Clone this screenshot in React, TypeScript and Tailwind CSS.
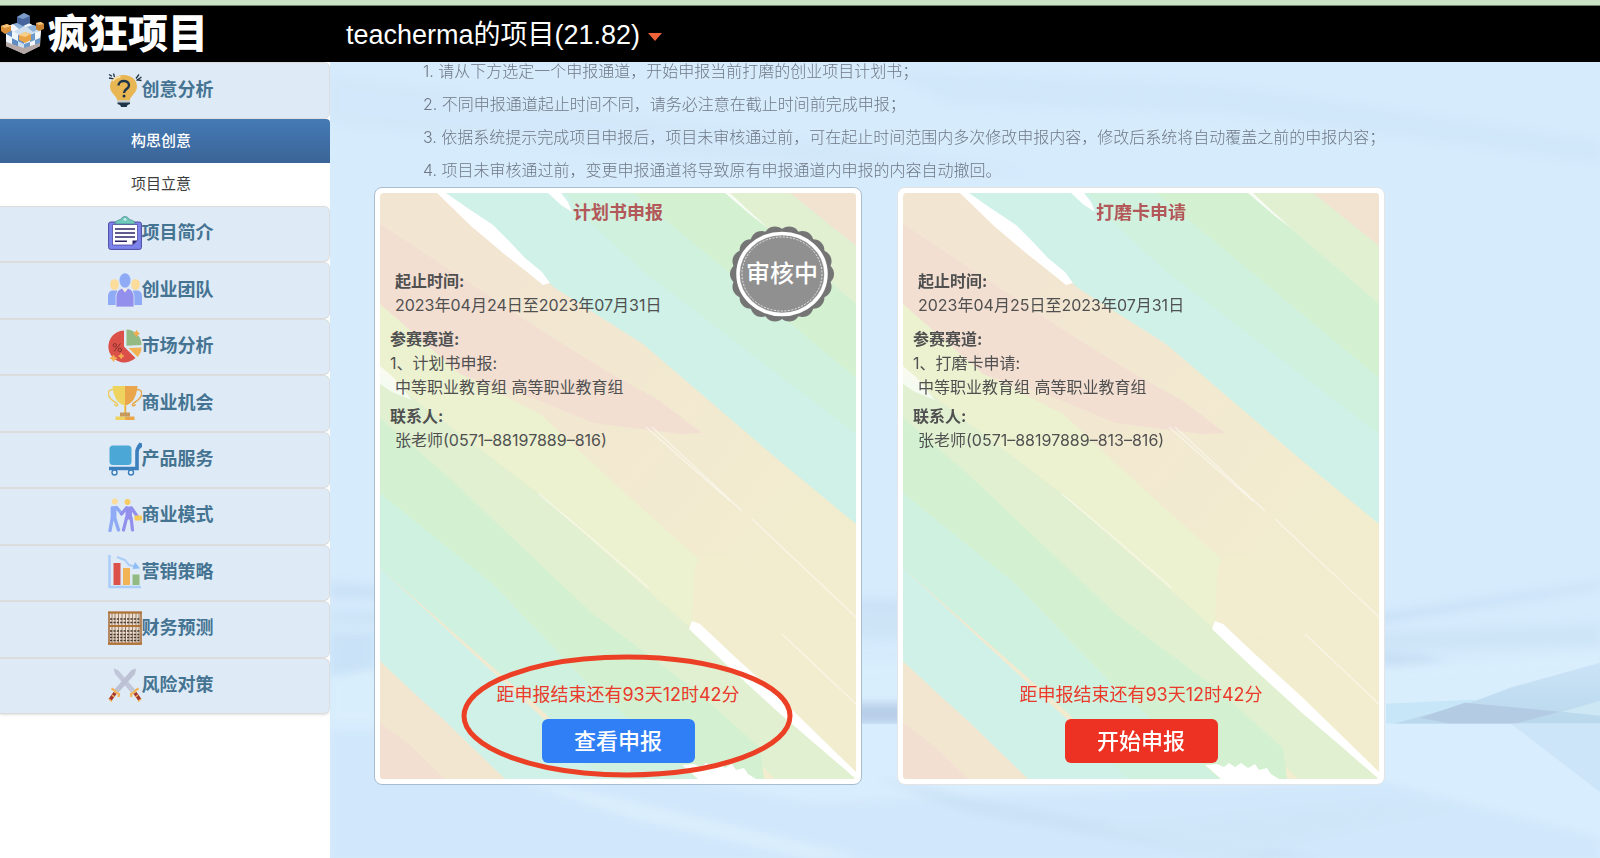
import type { ReactNode } from 'react';

function Svg({ children }: { children: ReactNode }) {
  return (
    <svg viewBox="0 0 34 34" className="size-[34px] shrink-0" aria-hidden="true">
      {children}
    </svg>
  );
}

function BulbIcon() {
  return (
    <Svg>
      <path d="M1 1.500l3 1.800M5.500.5l1 3.500M1 5l5 .8M31 1.500l-3 4M33.500 4l-5 3.500M33.500 7.500l-4.500-.6" stroke="#1e3448" strokeWidth="1.300" fill="none" />
      <path d="M15.500 2C7.500 2 2 7 2 13.500c0 4 2.300 6.500 4.500 9 1.600 1.800 2.500 3.200 2.700 5h12.600c.2-1.800 1.100-3.200 2.700-5 2.200-2.500 4.500-5 4.500-9C29 7 23.500 2 15.500 2z" fill="#e8b754" />
      <path d="M5 8c1.500-2.500 4-4 7.500-4.300" stroke="#f9e8bd" strokeWidth="1.600" fill="none" />
      <path d="M10.500 12.500c0-6 10.500-6 10.500-.3 0 4-5 3.600-5 7.800" stroke="#1e3448" strokeWidth="2.400" fill="none" />
      <circle cx="16" cy="23" r="1.500" fill="#1e3448" />
      <path d="M9.500 27.500h12.500v2H9.500z" fill="#bfc6c9" />
      <path d="M9.500 29.500h12.500v1.500l-2.500 1-.8 2h-5.600l-1-2-2.600-1z" fill="#1e3448" />
    </Svg>
  );
}

function ClipboardIcon() {
  return (
    <Svg>
      <rect x=".6" y="6" width="32.800" height="27.400" rx="2" fill="#7c83ea" stroke="#4c49a0" strokeWidth="1" />
      <path d="M4.500 8.500h25v16l-5 4.500h-20z" fill="#fff" stroke="#4c49a0" strokeWidth=".8" />
      <path d="M29.500 24.500l-5 4.500v-4.500z" fill="#2c2469" />
      <path d="M7 8c0-2.500 2.500-4 6-4.500C13.500 1.500 15 .6 17 .6s3.500.9 4 2.900C24.500 4 27 5.500 27 8z" fill="#6fcabb" stroke="#48808e" strokeWidth=".7" />
      <circle cx="17" cy="3.500" r="1.300" fill="#dcebf6" />
      <path d="M7 13h20M7 17h20M7 21h20M7 25.300h12" stroke="#2c2469" strokeWidth="1.500" />
    </Svg>
  );
}

function TeamIcon() {
  return (
    <Svg>
      <ellipse cx="6.500" cy="11.500" rx="4.300" ry="5.500" fill="#fbdc9a" />
      <ellipse cx="27.500" cy="11.500" rx="4.300" ry="5.500" fill="#fbdc9a" />
      <path d="M0 32V24c0-4.500 2-6.500 5-6.500h4v14.500zM34 32V24c0-4.500-2-6.500-5-6.500h-4v14.500z" fill="#8fabf6" />
      <path d="M8 34V24c0-4 2-7.500 5.500-8.500h7C24 16.500 26 20 26 24v10z" fill="#938fec" stroke="#deebf6" strokeWidth=".8" />
      <path d="M14 15.500h6l-3 4z" fill="#f7eee0" />
      <ellipse cx="17" cy="7.500" rx="5.500" ry="7.300" fill="#8fabf6" />
    </Svg>
  );
}

function PieIcon() {
  return (
    <Svg>
      <path d="M16 1.500A16 16 0 1 0 27.500 29L16 17.500z" fill="#db5149" />
      <path d="M18.500.5A15.500 15.500 0 0 1 33.500 16l-15 .8z" fill="#93ba82" />
      <path d="M33.500 18.500c0 4-1.500 7-4 9.500L20.500 19z" fill="#f2b355" />
      <circle cx="6.800" cy="16.300" r="1.700" fill="none" stroke="#87302d" strokeWidth="1" />
      <circle cx="11.800" cy="21" r="1.700" fill="none" stroke="#87302d" strokeWidth="1" />
      <path d="M12.500 14.500l-6.500 8" stroke="#87302d" strokeWidth="1" />
      <path d="M28.500 1.500l1 2 2 1-2 1-1 2-1-2-2-1 2-1zM5.500 26l1 2.200 2.300 1-2.300 1-1 2.300-1-2.300-2.300-1 2.300-1zM13.200 24.500l.8 1.800 1.800.8-1.800.8-.8 1.800-.8-1.800-1.800-.8 1.800-.8z" fill="#f4ad4c" stroke="#f4ad4c" />
    </Svg>
  );
}

function TrophyIcon() {
  return (
    <Svg>
      <path d="M6 3.500C-1 3-1 9 3 13s6 3.500 6.500 5.500-3 1.500-2.500-.5" fill="none" stroke="#eccb5c" strokeWidth="1.500" />
      <path d="M28 3.500c7-.5 7 5.500 3 9.500s-6 3.500-6.500 5.500 3 1.500 2.500-.5" fill="none" stroke="#e7a94b" strokeWidth="1.500" />
      <path d="M4.500 0H17v19.500C10 18 5.500 12 4.500 0zM16 19h1v8h-1zM7.500 30.500H17V34H7.500z" fill="#efd35f" />
      <path d="M29.500 0H17v19.500C24 18 28.500 12 29.500 0zM17 19h1.200v8H17zM17 30.500h9.500V34H17z" fill="#e9a64a" />
      <path d="M12 26.500h10v4H12z" fill="#c59a5c" />
    </Svg>
  );
}

function CartIcon() {
  return (
    <Svg>
      <rect x="1.500" y="3.500" width="22" height="19.500" rx="3.500" fill="#4aa7d6" />
      <path d="M1 26.500h28V10c0-3.500 1-5 3.500-7.500" fill="none" stroke="#3c7fbd" strokeWidth="3.600" />
      <path d="M29 4.500l2.500-4 2.500 1v3.500l-3.500 3z" fill="#3c7fbd" />
      <circle cx="6.500" cy="30.500" r="2.500" fill="#e6f2fa" stroke="#3c7fbd" strokeWidth="1.400" />
      <circle cx="23" cy="30.500" r="2.500" fill="#e6f2fa" stroke="#3c7fbd" strokeWidth="1.400" />
    </Svg>
  );
}

function HandshakeIcon() {
  return (
    <Svg>
      <circle cx="6.800" cy="3.500" r="3" fill="#fbdc9a" />
      <circle cx="19.500" cy="4" r="3" fill="#f6cb62" />
      <path d="M4.500 10v9L2 32.500M6.500 10v9.500l4 12.500M8.500 9.500l5 6" stroke="#8fabf6" strokeWidth="3.400" strokeLinecap="round" strokeLinejoin="round" fill="none" />
      <path d="M2.800 8.500h5.500v12H2.800z" fill="#8fabf6" />
      <path d="M18.500 10l-5 6M18.500 20l-3 12M23 19.500L24.500 32M23.500 10l5.500 8" stroke="#938fec" strokeWidth="3.200" strokeLinecap="round" fill="none" />
      <path d="M17.500 8.500h6.500v13h-6.500z" fill="#938fec" />
      <rect x="26.500" y="17.500" width="7.500" height="5" rx="1" fill="#f6cb5a" />
    </Svg>
  );
}

function BarsIcon() {
  return (
    <Svg>
      <path d="M1.500 0v32H33" fill="none" stroke="#a9cdf8" strokeWidth="2.400" />
      <path d="M5.500 8h7v22h-7z" fill="#db5149" />
      <path d="M15 13h7v17h-7z" fill="#f2b355" />
      <path d="M24.500 19.500h7V30h-7z" fill="#93ba82" />
      <path d="M9 2l8 3 4 5 7 1.500" fill="none" stroke="#a9cdf8" strokeWidth="2" />
      <path d="M27 7l5 6.500-7.500.5z" fill="#8fbdf5" />
    </Svg>
  );
}

function AbacusIcon() {
  return (
    <Svg>
      <rect x="1" y="1.500" width="32" height="31.500" fill="#eadfd2" stroke="#a9713f" strokeWidth="1.600" />
      <path d="M4 2v31M7 2v31M10.500 2v31M14 2v31M17.500 2v31M21 2v31M24.500 2v31M28 2v31M31 2v31" stroke="#8c6a4c" strokeWidth=".8" />
      <path d="M2 8h30M2 11.500h30M2 20h30M2 23.500h30M2 26.500h30M2 29.500h30" stroke="#4b3a30" strokeWidth="1.700" strokeDasharray="2.200 1.200" />
      <path d="M0 1.500h34M1 15h32M0 32.500h34" stroke="#b07338" strokeWidth="1.800" />
    </Svg>
  );
}

function SwordsIcon() {
  return (
    <Svg>
      <path d="M5.500.5l4.500 1.500L27 21.500 23.500 25 7 6z" fill="#c1c6d8" />
      <path d="M28 .5L23.500 2 6.500 21.500 10 25 27 6z" fill="#bcc1d4" />
      <path d="M3.500 20.500l2.500 1.500 2 2.500 3 1.500-.5 3M30.500 20.500L28 22l-2 2.500-3 1.500.5 3" fill="none" stroke="#f2b355" strokeWidth="2.200" />
      <path d="M7 25l-5 7M27 25l5 7" stroke="#a3342f" strokeWidth="3.600" />
      <path d="M4 27l2.500 2M30 27l-2.500 2M1 31l3 2.500M33 31l-3 2.500" stroke="#f2b355" strokeWidth="1.500" />
    </Svg>
  );
}

function CubeLogo() {
  return (
    <svg viewBox="0 0 44 42" className="h-[42px] w-11 shrink-0" aria-hidden="true">
      <path d="M6 14L24 8l17 8-1 17-16 8-18-8z" fill="#cfdff0" />
      <path d="M6 14l7-3 7 4-7 4zM20 9l6-1 6 4-7 2z" fill="#f2f7fb" />
      <path d="M13 11l7-2 5 4-6 3zM27 14l7-2 6 3-7 4z" fill="#8fb2da" />
      <path d="M6 14l6 4v6l-6-3zM18 22l6 2v7l-6-3zM12 25l6 3v6l-6-3z" fill="#5f8cc4" />
      <path d="M12 18l6 3v7l-6-3zM6 21l6 4v6l-6-3z" fill="#f0f6fb" />
      <path d="M24 24l6-2v7l-6 2zM35 20l6-2-1 7-5 2zM30 29l5-2v7l-5 2z" fill="#f5f8fb" />
      <path d="M30 22l5-2v7l-5 2zM24 31l6-2v7l-6 3zM35 27l5-2v7l-5 2z" fill="#6e9acb" />
      <path d="M6 29l18 6 16-5v3l-16 8-18-8z" fill="#b5a7a6" />
      <path d="M19 22l6-3 6 2v6l-6 3-6-3z" fill="#e8a447" />
      <path d="M19 22l6-3 6 2-6 3z" fill="#f6d08b" />
      <path d="M17 4l7-4 6 3v7l-7 3-6-3z" fill="#45659c" />
      <path d="M17 4l7-4 6 3-7 3z" fill="#7e9cc9" />
      <path d="M1 13l6-2 4 2v5l-6 3-4-3z" fill="#d98f3a" />
      <path d="M1 13l6-2 4 2-6 2z" fill="#f4c57c" />
      <path d="M36 10l5-1 3 2v5l-5 2-3-2z" fill="#c98532" />
      <path d="M36 10l5-1 3 2-5 1z" fill="#f4c57c" />
    </svg>
  );
}

// painted diagonal stripes behind every channel card
function StripeArt({ id }: { id: string }) {
  return (
    <svg
      viewBox="0 0 476 586"
      preserveAspectRatio="none"
      className="absolute inset-0 size-full"
      aria-hidden="true"
    >
      <defs>
        <linearGradient id={id} x1="0" y1="0" x2="1" y2="1">
          <stop offset="0.15" stopColor="#f2e5d2" />
          <stop offset="0.8" stopColor="#f2edcf" />
        </linearGradient>
      </defs>
      <rect width="476" height="586" fill={`url(#${id})`} />
      <path d="M60 0H476V331L396 265 263 151 175 95z" fill="#cff1e7" />
      <path d="M185 0H253L476 185V241L263 78 205 25z" fill="#cff1de" />
      <path d="M253 0H346L476 111V185z" fill="#d3f1d1" />
      <path d="M346 0H410L476 53V111z" fill="#e1f0d0" />
      <path d="M410 0H476V53z" fill="#f2e3d1" />
      <path d="M0 31L165 140 230 180 280 208 322 240 300 241 213 230 140 200 80 181 0 111z" fill="#f2dfd2" />
      <path d="M0 111L80 181 160 221 246 301 313 361 402 438 350 420 322 440 306 431 159 301 0 180z" fill="#ecf2d0" />
      <path d="M314 385c0-24 16-28 34-20 22 8 40 34 54 73l-60 8-30-18z" fill="#f2edcf" />
      <path d="M0 180L159 301 306 431 476 586H395L313 505 213 421 66 288 0 230z" fill="#e1f0d0" />
      <path d="M0 225L66 282 213 421 313 495 380 555 384 586H313L206 488 113 391 0 305z" fill="#d3f1d1" />
      <path d="M0 300L113 391 206 488 316 586H213L166 521 0 375z" fill="#cff1df" />
      <path d="M0 375L166 528 225 586H125L0 468z" fill="#cff1e8" />
      <path d="M0 470L62 525 125 586H0z" fill="#f2e6d1" />
      <path d="M0 530L30 552 65 586H0z" fill="#f2dfd2" />
      <g fill="#fff">
        <path d="M57 0h9l20 14 27 18 16 16 16 17 17 14 8 11-7 2-16-13-24-19-32-27z" />
        <path d="M168 0h13l7 9 4 10-11-7z" />
        <path d="M345 0h5l18 17 20 18-16-12z" opacity=".8" />
        <path d="M312 428l8 3 34 32 45 41 77 75v7l-78-67-47-43-42-40z" />
        <path d="M302 572l12-1 7 3 5-4 6 4 6-4 7 5 7-4 4 6 8-2 4 6 8 5h-58z" />
        <path d="M0 173l14 12 18 22-20-8-12-8z" opacity=".7" />
      </g>
      <path d="M159 301l50 42 60 52M266 234l84 74M272 234l90 84M372 326l104 98M402 441l74 70" fill="none" stroke="#fff" strokeWidth="1.200" opacity=".5" />
    </svg>
  );
}

function Backdrop() {
  return (
    <svg
      viewBox="0 0 1270 796"
      preserveAspectRatio="none"
      className="absolute inset-0 size-full"
      aria-hidden="true"
    >
      <defs>
        <filter id="soften" x="-5%" y="-50%" width="110%" height="200%">
          <feGaussianBlur stdDeviation="4" />
        </filter>
        <linearGradient id="wedge" x1="0" y1="0" x2="0" y2="1">
          <stop offset="0" stopColor="#cbe3f7" />
          <stop offset="1" stopColor="#b9d8ec" />
        </linearGradient>
      </defs>
      <rect width="1270" height="796" fill="#d6ebfc" />
      <g filter="url(#soften)">
        <path d="M0 15L300 55 700 110 300 90 0 60z" fill="#cfe5f8" opacity=".5" />
        <path d="M560 10L900 25 1270 80V100L900 50 620 40z" fill="#cfe5f8" opacity=".6" />
        <path d="M0 520L60 525 1056 550 1270 520V525L1056 560 0 535z" fill="#cae1f6" />
        <path d="M0 548H560L1056 570 1270 562V582L1056 588 0 562z" fill="#cde4f7" />
        <path d="M1040 590L1090 592 1120 598 1056 603z" fill="#c6def4" />
        <path d="M0 608L560 600 1056 606 1270 590V661H0z" fill="#d9eefd" />
        <path d="M0 570H45V606L0 614z" fill="#c9e2f7" />
        <path d="M500 640H600V661H500z" fill="#b8cfe8" />
      </g>
      <path d="M1056 641L1140 637 1165 640 1110 661H1056z" fill="#c7e6f7" />
      <path d="M1064 661L1140 640 1180 625 1270 600V661z" fill="url(#wedge)" />
      <path d="M1090 655L1135 640 1230 649 1185 661H1120z" fill="#b4cbe4" />
      <path d="M1232 649L1270 638V653z" fill="#cde7f4" />
      <rect y="661" width="1270" height="135" fill="#d8edfd" />
      <path d="M1181 661H1270V729z" fill="#cde5f8" />
      <g filter="url(#soften)">
        <path d="M0 667H45L480 740 1056 720 1270 775V800H0z" fill="#cfe6fa" opacity=".8" />
        <path d="M150 705L330 745 540 796H480L300 755z" fill="#daeefd" />
        <path d="M545 715L720 750 1000 796H900L640 750z" fill="#cbe1f5" opacity=".8" />
        <path d="M760 765L1050 735 1130 745 900 796z" fill="#d0e6f9" opacity=".8" />
      </g>
    </svg>
  );
}

function ReviewBadge() {
  const petals = Array.from({ length: 18 }, (_, i) => (i * Math.PI * 2) / 18);
  return (
    <div className="absolute top-[39px] right-7 grid h-24 w-[104px] place-items-center">
      <svg viewBox="0 0 104 96" className="absolute inset-0 size-full" aria-hidden="true">
        {petals.map((a) => (
          <ellipse key={a} cx={52 + Math.cos(a) * 41} cy={48 + Math.sin(a) * 37} rx="11" ry="11" fill="#757575" />
        ))}
        <ellipse cx="52" cy="48" rx="48" ry="44" fill="#757575" />
        <ellipse cx="52" cy="48" rx="44" ry="40.500" fill="#909090" stroke="#fff" strokeWidth="3.500" />
        <ellipse cx="52" cy="48" rx="40" ry="37" fill="none" stroke="#e8e8e8" strokeWidth="1" strokeDasharray="2 1.500" />
      </svg>
      <span className="relative text-2xl font-medium text-white">审核中</span>
    </div>
  );
}

const menu = [
  { label: '项目简介', icon: <ClipboardIcon /> },
  { label: '创业团队', icon: <TeamIcon /> },
  { label: '市场分析', icon: <PieIcon /> },
  { label: '商业机会', icon: <TrophyIcon /> },
  { label: '产品服务', icon: <CartIcon /> },
  { label: '商业模式', icon: <HandshakeIcon /> },
  { label: '营销策略', icon: <BarsIcon /> },
  { label: '财务预测', icon: <AbacusIcon /> },
  { label: '风险对策', icon: <SwordsIcon /> },
];

const rules = [
  '1. 请从下方选定一个申报通道，开始申报当前打磨的创业项目计划书；',
  '2. 不同申报通道起止时间不同，请务必注意在截止时间前完成申报；',
  '3. 依据系统提示完成项目申报后，项目未审核通过前，可在起止时间范围内多次修改申报内容，修改后系统将自动覆盖之前的申报内容；',
  '4. 项目未审核通过前，变更申报通道将导致原有申报通道内申报的内容自动撤回。',
];

function MenuItem({ label, icon }: { label: string; icon: ReactNode }) {
  return (
    <a
      href="#"
      className="flex flex-1 items-center justify-center rounded-r-md border-y border-r border-[#dcdcdc] bg-[#deebf6] pr-2 pb-0.5 text-lg font-bold text-[#457392]"
    >
      {icon}
      {label}
    </a>
  );
}

type ChannelProps = {
  id: string;
  title: string;
  period: string;
  contact: string;
  frame: string;
  children: ReactNode;
};

function ChannelCard({ id, title, period, contact, frame, children }: ChannelProps) {
  return (
    <section className={`relative rounded-lg border bg-white p-[5px] ${frame}`}>
      <div className="relative overflow-hidden rounded-sm">
        <StripeArt id={id} />
        <div className="relative flex h-[586px] flex-col px-[10px] pt-[6px] pb-4 text-base leading-6 text-[#505050]">
          <h2 className="text-center text-lg leading-7 font-bold text-[#b35858]">{title}</h2>
          <dl className="mt-[42px]">
            <dt className="pl-[5px] font-bold">起止时间:</dt>
            <dd className="pl-[5px]">{period}</dd>
            <dt className="mt-[10px] font-bold">参赛赛道:</dt>
            <dd>1、{title}:</dd>
            <dd className="pl-[5px]">中等职业教育组 高等职业教育组</dd>
            <dt className="mt-[5px] font-bold">联系人:</dt>
            <dd className="pl-[5px]">{contact}</dd>
          </dl>
          <div className="mt-auto flex flex-col items-center gap-[10px]">
            <p className="text-lg leading-7 text-[#e93a2b]">距申报结束还有93天12时42分</p>
            {children}
          </div>
        </div>
      </div>
    </section>
  );
}

export default function App() {
  return (
    <div className="flex min-h-screen flex-col overflow-hidden bg-white font-['Inter','Noto_Sans_CJK_SC',sans-serif]">
      <div className="h-[6px] border-b border-[#6f866c] bg-[#cbe2c7]" />
      <header className="relative z-10 flex h-14 items-center bg-black text-white">
        <div className="flex w-[330px] items-center gap-1">
          <CubeLogo />
          <span className="text-[40px] leading-none font-black">疯狂项目</span>
        </div>
        <button className="ml-4 flex items-center gap-2 pt-0.5 font-['Liberation_Sans','Noto_Sans_CJK_SC',sans-serif] text-[27px] leading-10">
          teacherma的项目(21.82)
          <svg viewBox="0 0 14 8" className="mt-1 h-2 w-[14px]" aria-hidden="true">
            <path d="M0 0h14L7 8z" fill="#f0623a" />
          </svg>
        </button>
      </header>

      <div className="flex flex-1">
        <nav className="w-[330px] shrink-0">
          <div className="flex h-[57px]">
            <MenuItem label="创意分析" icon={<BulbIcon />} />
          </div>
          <a
            href="#"
            className="flex h-11 items-center justify-center rounded-tr bg-linear-to-b from-[#457ab5] to-[#3a6497] pr-2 text-[15px] font-medium text-white"
          >
            构思创意
          </a>
          <a href="#" className="flex h-[43px] items-center justify-center bg-white pr-2 text-[15px] text-[#3d3d3d]">
            项目立意
          </a>
          <div className="flex h-[508px] flex-col rounded-r-md shadow-sm">
            {menu.map((item) => (
              <MenuItem key={item.label} {...item} />
            ))}
          </div>
        </nav>

        <main className="relative flex-1 pb-[74px] pl-11">
          <Backdrop />
          <ol className="relative -mt-[7px] pl-[49px] text-base leading-[33px] font-light text-[#6f7885]">
            {rules.map((rule) => (
              <li key={rule}>{rule}</li>
            ))}
          </ol>
          <div className="relative grid max-w-[1011px] grid-cols-2 gap-[35px]">
            <div className="relative">
              <ChannelCard
                id="plan-art"
                title="计划书申报"
                period="2023年04月24日至2023年07月31日"
                contact="张老师(0571–88197889–816)"
                frame="border-[#a9bdd0]"
              >
                <button className="h-11 w-[153px] rounded-md bg-[#307ff7] text-[22px] font-medium text-white">
                  查看申报
                </button>
              </ChannelCard>
              <ReviewBadge />
              <svg
                viewBox="0 0 332 124"
                className="pointer-events-none absolute bottom-[7px] left-[87px] h-[124px] w-[332px]"
                aria-hidden="true"
              >
                <ellipse cx="166" cy="62" rx="163" ry="59" fill="none" stroke="#ec4026" strokeWidth="5" />
              </svg>
            </div>
            <ChannelCard
              id="polish-art"
              title="打磨卡申请"
              period="2023年04月25日至2023年07月31日"
              contact="张老师(0571–88197889–813–816)"
              frame="border-[#e2e4e6]"
            >
              <button className="h-11 w-[153px] rounded-md bg-[#ed3223] text-[22px] font-medium text-white">
                开始申报
              </button>
            </ChannelCard>
          </div>
        </main>
      </div>
    </div>
  );
}
